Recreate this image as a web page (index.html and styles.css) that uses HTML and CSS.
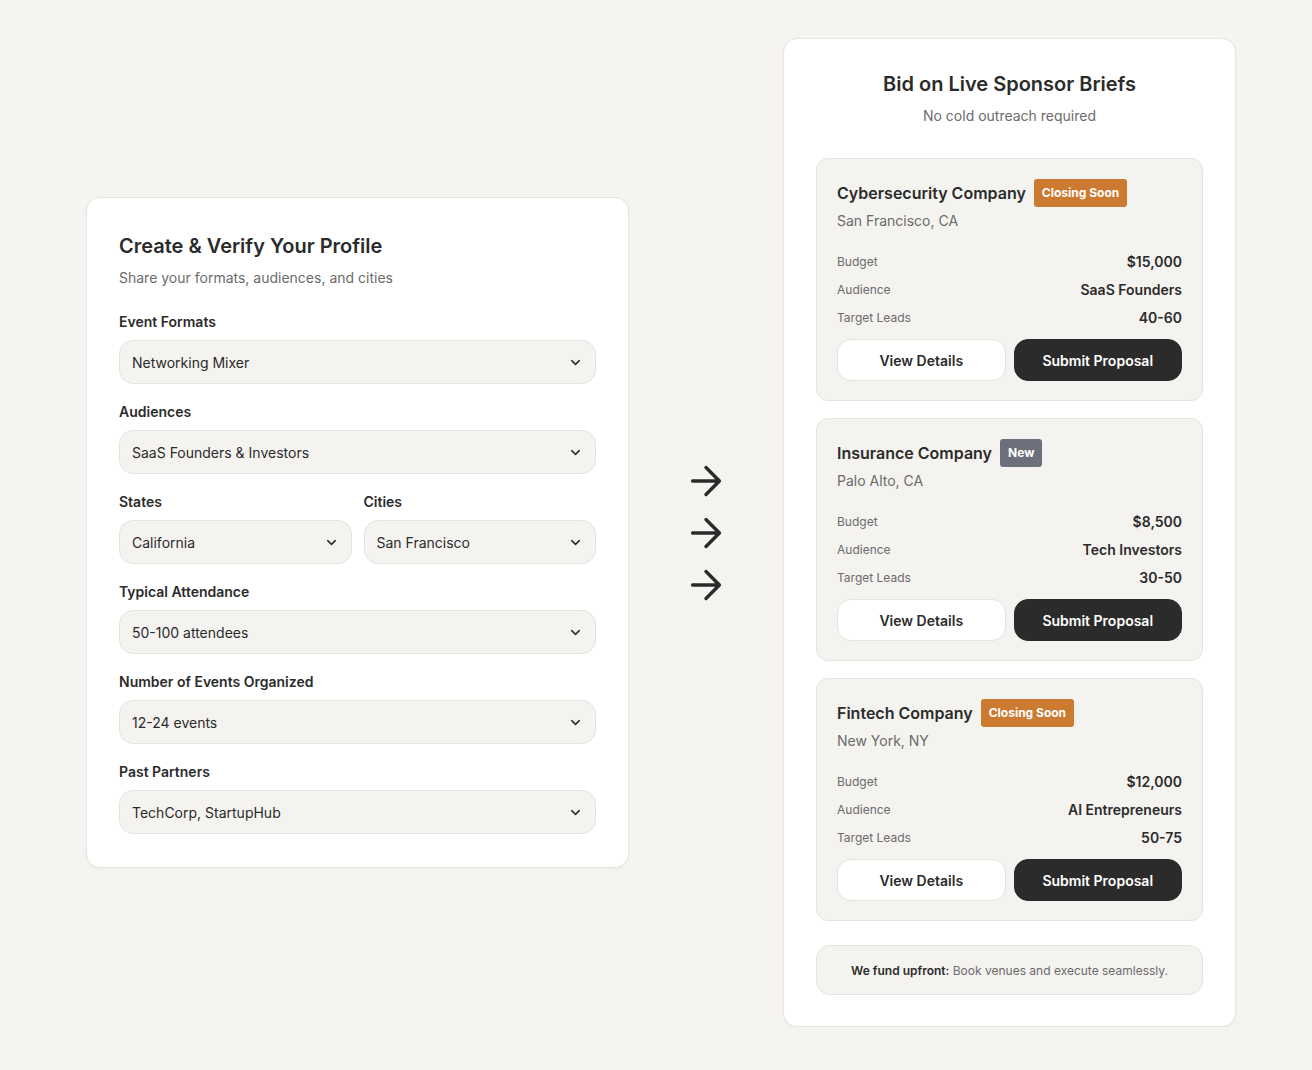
FILE: index.html
```html
<!DOCTYPE html>
<html lang="en">

<head>
    <meta charset="UTF-8" />
    <meta name="viewport" content="width=device-width, initial-scale=1.0" />
    <title>Sponsor Briefs</title>
    <link rel="stylesheet" href="styles.css">
</head>

<body>
    <main class="flow">
        <section class="profile">
            <h1>Create &amp; Verify Your Profile</h1>
            <p class="sub">Share your formats, audiences, and cities</p>

            <div class="field">
                <label>Event Formats</label>
                <div class="select"><span>Networking Mixer</span><svg viewBox="0 0 24 24"><path d="M6 9l6 6 6-6" /></svg></div>
            </div>

            <div class="field">
                <label>Audiences</label>
                <div class="select"><span>SaaS Founders &amp; Investors</span><svg viewBox="0 0 24 24"><path d="M6 9l6 6 6-6" /></svg></div>
            </div>

            <div class="field-row">
                <div class="field">
                    <label>States</label>
                    <div class="select"><span>California</span><svg viewBox="0 0 24 24"><path d="M6 9l6 6 6-6" /></svg></div>
                </div>
                <div class="field">
                    <label>Cities</label>
                    <div class="select"><span>San Francisco</span><svg viewBox="0 0 24 24"><path d="M6 9l6 6 6-6" /></svg></div>
                </div>
            </div>

            <div class="field">
                <label>Typical Attendance</label>
                <div class="select"><span>50-100 attendees</span><svg viewBox="0 0 24 24"><path d="M6 9l6 6 6-6" /></svg></div>
            </div>

            <div class="field">
                <label>Number of Events Organized</label>
                <div class="select"><span>12-24 events</span><svg viewBox="0 0 24 24"><path d="M6 9l6 6 6-6" /></svg></div>
            </div>

            <div class="field">
                <label>Past Partners</label>
                <div class="select"><span>TechCorp, StartupHub</span><svg viewBox="0 0 24 24"><path d="M6 9l6 6 6-6" /></svg></div>
            </div>
        </section>

        <div class="arrows">
            <svg viewBox="0 0 24 24"><path d="M5 12h14M12 5l7 7-7 7" /></svg>
            <svg viewBox="0 0 24 24"><path d="M5 12h14M12 5l7 7-7 7" /></svg>
            <svg viewBox="0 0 24 24"><path d="M5 12h14M12 5l7 7-7 7" /></svg>
        </div>

        <section class="briefs">
            <h2>Bid on Live Sponsor Briefs</h2>
            <p class="sub">No cold outreach required</p>

            <div class="brief-list">
                <div class="brief">
                    <div class="brief-head">
                        <h3>Cybersecurity Company</h3>
                        <span class="tag soon">Closing Soon</span>
                    </div>
                    <div class="location">San Francisco, CA</div>
                    <div class="stats">
                        <div class="stat"><span>Budget</span><b>$15,000</b></div>
                        <div class="stat"><span>Audience</span><b>SaaS Founders</b></div>
                        <div class="stat"><span>Target Leads</span><b>40-60</b></div>
                    </div>
                    <div class="actions">
                        <button class="ghost">View Details</button>
                        <button class="dark">Submit Proposal</button>
                    </div>
                </div>

                <div class="brief">
                    <div class="brief-head">
                        <h3>Insurance Company</h3>
                        <span class="tag new">New</span>
                    </div>
                    <div class="location">Palo Alto, CA</div>
                    <div class="stats">
                        <div class="stat"><span>Budget</span><b>$8,500</b></div>
                        <div class="stat"><span>Audience</span><b>Tech Investors</b></div>
                        <div class="stat"><span>Target Leads</span><b>30-50</b></div>
                    </div>
                    <div class="actions">
                        <button class="ghost">View Details</button>
                        <button class="dark">Submit Proposal</button>
                    </div>
                </div>

                <div class="brief">
                    <div class="brief-head">
                        <h3>Fintech Company</h3>
                        <span class="tag soon">Closing Soon</span>
                    </div>
                    <div class="location">New York, NY</div>
                    <div class="stats">
                        <div class="stat"><span>Budget</span><b>$12,000</b></div>
                        <div class="stat"><span>Audience</span><b>AI Entrepreneurs</b></div>
                        <div class="stat"><span>Target Leads</span><b>50-75</b></div>
                    </div>
                    <div class="actions">
                        <button class="ghost">View Details</button>
                        <button class="dark">Submit Proposal</button>
                    </div>
                </div>
            </div>

            <div class="note"><b>We fund upfront:</b> Book venues and execute seamlessly.</div>
        </section>
    </main>
</body>

</html>
```

FILE: styles.css
```css
* {
    box-sizing: border-box;
}

body {
    font-family: Inter, 'Noto Sans', sans-serif;
    background: #f6f4f0;
    margin: 0;
    color: #2b2b2b;
}

.flow {
    display: flex;
    align-items: center;
    padding: 38px 0 0 86px;
}

/* left card */
.profile {
    width: 543px;
    background: #fff;
    border: 1px solid #e8e5e0;
    border-radius: 14px;
    padding: 34px 32px 33px;
    box-shadow: 0 1px 3px rgba(0, 0, 0, 0.04);
}

.profile h1,
.briefs h2 {
    margin: 0;
    font-size: 20px;
    line-height: 28px;
    font-weight: 600;
}

.sub {
    margin: 8px 0 0;
    font-size: 14px;
    line-height: 20px;
    color: #6b6b6b;
}

.profile .sub {
    margin-bottom: 24px;
}

.field {
    margin-bottom: 18px;
}

.profile > .field:last-child {
    margin-bottom: 0;
}

.field label {
    display: block;
    font-size: 14px;
    line-height: 20px;
    font-weight: 600;
    margin-bottom: 8px;
}

.field-row {
    display: grid;
    grid-template-columns: 1fr 1fr;
    gap: 12px;
}

.select {
    display: flex;
    align-items: center;
    justify-content: space-between;
    height: 44px;
    padding: 0 12px 0 12px;
    background: #f4f3ef;
    border: 1px solid #e5e3de;
    border-radius: 14px;
    font-size: 14px;
}

.select svg {
    width: 15px;
    height: 15px;
    fill: none;
    stroke: #2b2b2b;
    stroke-width: 2.4;
    stroke-linecap: round;
    stroke-linejoin: round;
}

/* arrows */
.arrows {
    width: 154px;
    display: flex;
    flex-direction: column;
    align-items: center;
    gap: 6px;
}

.arrows svg {
    width: 46px;
    height: 46px;
    fill: none;
    stroke: #2b2b2b;
    stroke-width: 1.8;
    stroke-linecap: round;
    stroke-linejoin: round;
}

/* right card */
.briefs {
    width: 453px;
    background: #fff;
    border: 1px solid #e8e5e0;
    border-radius: 14px;
    padding: 31px 32px 31px;
    text-align: center;
    box-shadow: 0 1px 3px rgba(0, 0, 0, 0.04);
}

.brief-list {
    margin-top: 32px;
    display: flex;
    flex-direction: column;
    gap: 17px;
    text-align: left;
}

.brief {
    background: #f4f3ef;
    border: 1px solid #e5e3de;
    border-radius: 12px;
    padding: 20px 20px 19px;
}

.brief-head {
    display: flex;
    align-items: center;
    gap: 8px;
    height: 28px;
}

.brief-head h3 {
    margin: 0;
    font-size: 16px;
    font-weight: 600;
}

.tag {
    font-size: 12px;
    font-weight: 700;
    color: #fff;
    padding: 0 8px;
    line-height: 28px;
    border-radius: 3px;
}

.tag.soon {
    background: #cd7a31;
}

.tag.new {
    background: #6b707b;
}

.location {
    margin-top: 4px;
    font-size: 14px;
    line-height: 20px;
    color: #6b6b6b;
}

.stats {
    margin-top: 21px;
    display: flex;
    flex-direction: column;
    gap: 8px;
}

.stat {
    display: flex;
    justify-content: space-between;
    align-items: center;
    line-height: 20px;
}

.stat span {
    font-size: 12px;
    color: #6b6b6b;
}

.stat b {
    font-size: 14px;
    font-weight: 600;
}

.actions {
    display: flex;
    gap: 8px;
    margin-top: 11px;
}

.actions button {
    flex: 1;
    height: 42px;
    border-radius: 14px;
    font-family: inherit;
    font-size: 14px;
    font-weight: 600;
    cursor: pointer;
}

.ghost {
    background: #fff;
    border: 1px solid #e5e3de;
    color: #2b2b2b;
}

.dark {
    background: #2b2b2b;
    border: 1px solid #2b2b2b;
    color: #fff;
}

.note {
    margin-top: 24px;
    background: #f4f3ef;
    border: 1px solid #e5e3de;
    border-radius: 14px;
    padding: 16px 12px 15px;
    font-size: 12px;
    line-height: 17px;
    color: #6b6b6b;
}

.note b {
    color: #2b2b2b;
    font-weight: 600;
}
```
